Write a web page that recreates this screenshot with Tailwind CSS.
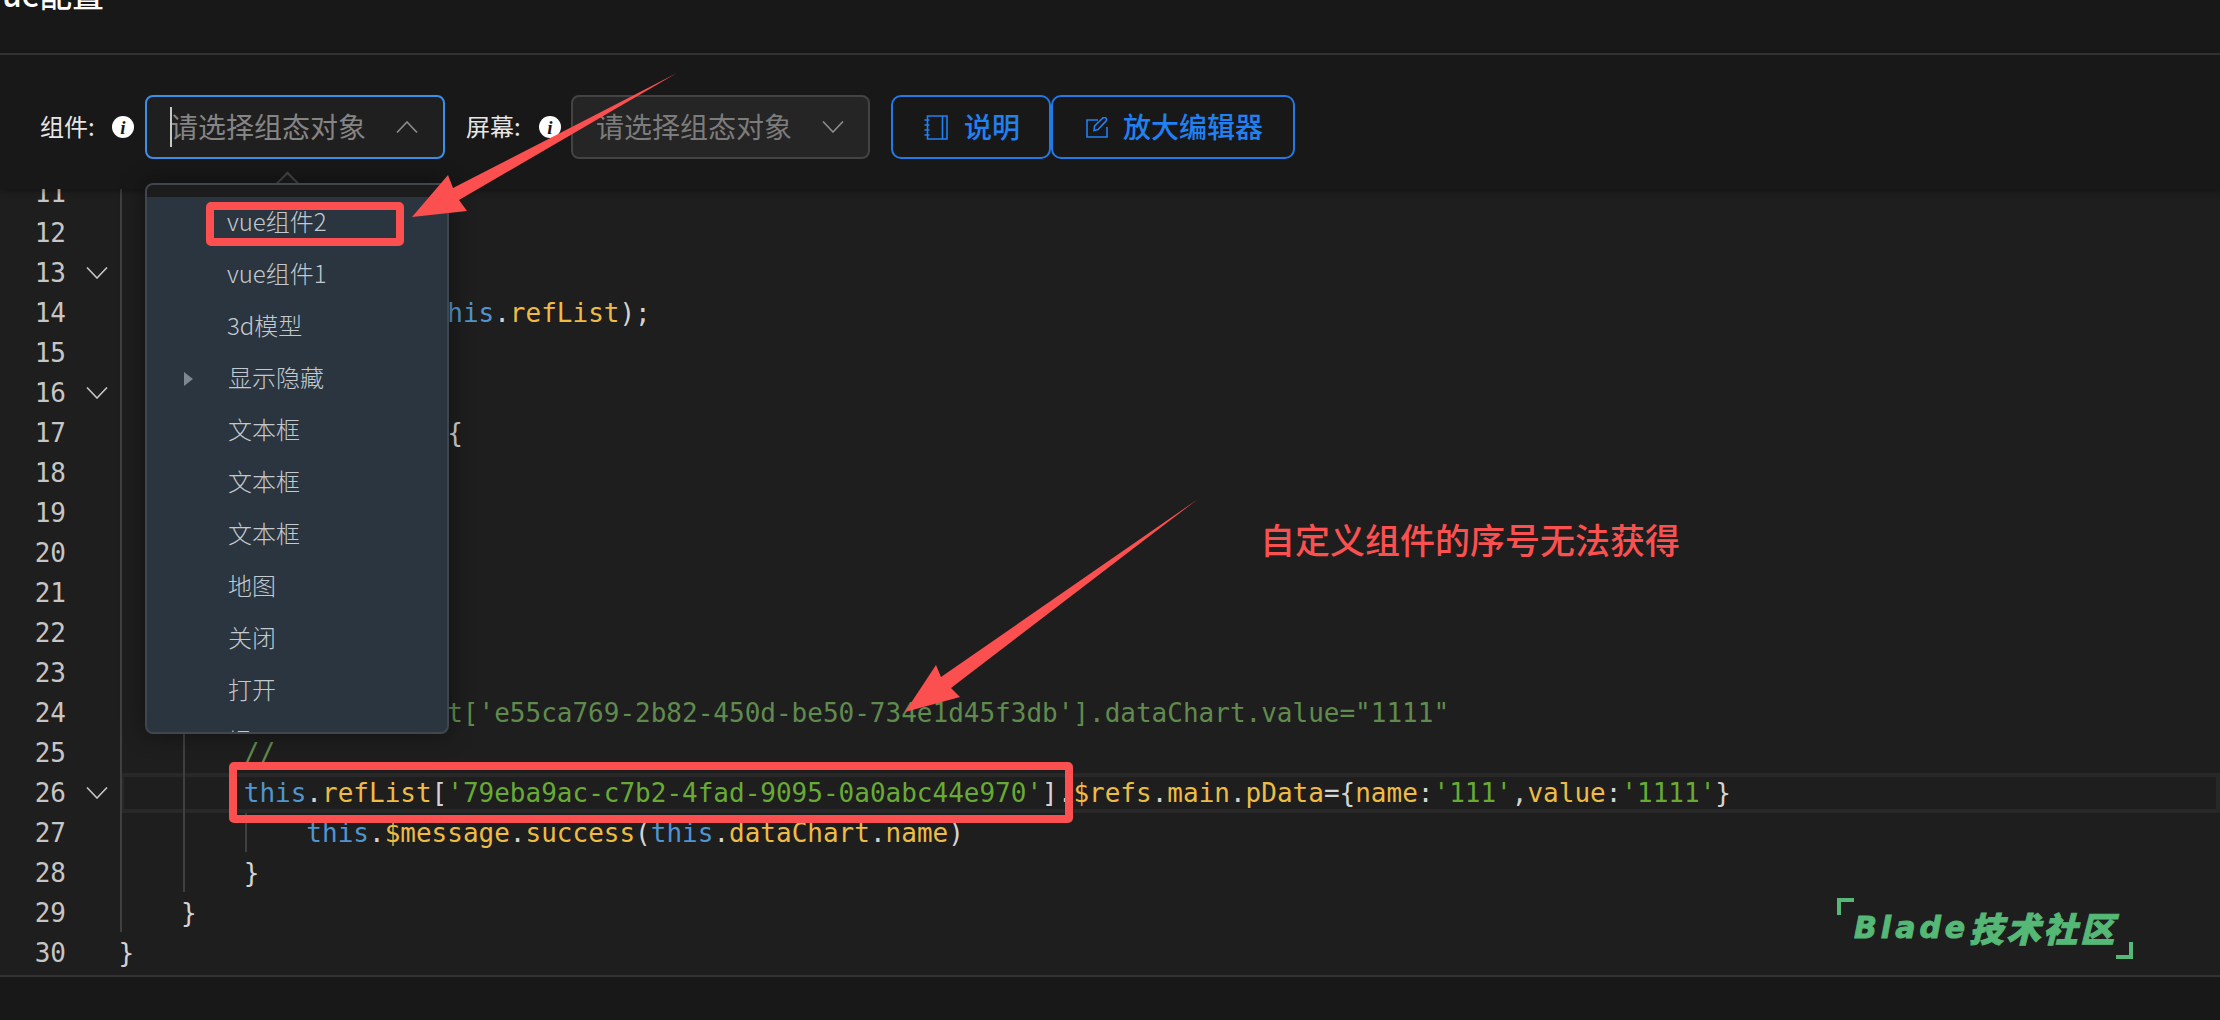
<!DOCTYPE html>
<html lang="en">
<head>
  <meta charset="UTF-8" />
  <title>ue配置</title>
  <script src="https://cdn.jsdelivr.net/npm/@tailwindcss/browser@4"></script>
</head>
<body class="bg-[#181818]">
<div class="relative w-[2220px] h-[1020px] overflow-hidden flex flex-col bg-[#181818] font-['Noto_Sans_CJK_SC',sans-serif]">

  <!-- Title bar, the title is cut off by the top of the window -->
  <header class="h-[53px] shrink-0 overflow-hidden">
    <h1 class="-mt-[23px] pl-[2px] text-[32px] leading-[32px] font-medium text-white">ue配置</h1>
  </header>
  <div class="h-[2px] shrink-0 bg-[#333333]"></div>

  <!-- Toolbar -->
  <section class="relative z-10 h-[134px] shrink-0 flex items-start pt-[40px] pl-[40px] bg-[#181818] shadow-[0_3px_6px_rgba(0,0,0,0.3)]">
    <span class="w-[72px] h-[64px] pb-[2px] flex items-center text-[24px] text-[#e6e6e6]">组件:</span>
    <span class="w-[22px] h-[22px] mt-[21px] rounded-full bg-white flex items-center justify-center font-['Liberation_Serif',serif] italic font-bold text-[19px] leading-none text-[#181818]">i</span>
    <div class="relative ml-[11px] w-[300px] h-[64px] rounded-[8px] border-2 border-[#3b8fe8] bg-[#1f1f1f] flex items-center justify-between pl-[23px] pr-[25px]">
      <span class="absolute left-[23px] top-[10px] w-[2px] h-[40px] bg-[#c8c8c8]"></span>
      <span class="pb-[2px] text-[28px] text-[#858585]">请选择组态对象</span>
      <svg class="w-[22px] h-[12px]" viewBox="0 0 22 12" fill="none" stroke="#8c8c8c" stroke-width="1.6"><path d="M1 11.5 11 1l10 10.5" /></svg>
    </div>
    <span class="ml-[21px] w-[73px] h-[64px] pb-[2px] flex items-center text-[24px] text-[#e6e6e6]">屏幕:</span>
    <span class="w-[22px] h-[22px] mt-[21px] rounded-full bg-white flex items-center justify-center font-['Liberation_Serif',serif] italic font-bold text-[19px] leading-none text-[#181818]">i</span>
    <div class="ml-[10px] w-[299px] h-[64px] rounded-[8px] border-2 border-[#434343] bg-[#252525] flex items-center justify-between pl-[23px] pr-[24px]">
      <span class="pb-[2px] text-[28px] text-[#7c7c7c]">请选择组态对象</span>
      <svg class="w-[22px] h-[12px]" viewBox="0 0 22 12" fill="none" stroke="#8c8c8c" stroke-width="1.6"><path d="M1 .5 11 11 21 .5" /></svg>
    </div>
    <button class="ml-[21px] w-[160px] h-[64px] rounded-[10px] border-2 border-[#2379e6] flex items-center pl-[31px] text-[28px] font-medium text-[#2180f2]">
      <svg class="w-[24px] h-[25px] mr-[16px]" viewBox="0 0 24 25" fill="none" stroke="#2180f2" stroke-width="1.6">
        <path d="M3.5 1h19.5v23H3.5zM18.5 1v23" />
        <path d="M.5 5h5M.5 10h5M.5 15h5M.5 20h5" />
      </svg>
      <span class="pb-[3px]">说明</span>
    </button>
    <button class="w-[244px] h-[64px] rounded-[10px] border-2 border-[#2379e6] flex items-center pl-[33px] text-[28px] font-medium text-[#2180f2]">
      <svg class="w-[22px] h-[21px] mr-[15px]" viewBox="0 0 22 21" fill="none" stroke="#2180f2" stroke-width="1.6">
        <path d="M12 3H1v17h20V10" />
        <path d="M8 13.5 8.6 9 16.5 1.2a1.8 1.8 0 0 1 3.4 2.9L12 12.5z" />
      </svg>
      <span class="pb-[3px]">放大编辑器</span>
    </button>
  </section>

  <!-- Code editor -->
  <main class="relative flex-1 overflow-hidden bg-[#1e1e1e] font-['DejaVu_Sans_Mono',monospace] text-[26px] leading-[40px] text-[#d4d4d4]">
    <div class="-mt-[16px]">
      <div class="flex h-[40px]"><span class="w-[66px] text-right text-[#c6c6c6]">11</span><span class="w-[54px]"></span><span class="flex-1 whitespace-pre"></span></div>
      <div class="flex h-[40px]"><span class="w-[66px] text-right text-[#c6c6c6]">12</span><span class="w-[54px]"></span><span class="flex-1 whitespace-pre"></span></div>
      <div class="flex h-[40px]"><span class="w-[66px] text-right text-[#c6c6c6]">13</span><span class="w-[54px] pl-[20px] flex items-center"><svg class="w-[22px] h-[12px]" viewBox="0 0 22 12" fill="none" stroke="#c5c5c5" stroke-width="1.6"><path d="M1 .5 11 11 21 .5" /></svg></span><span class="flex-1 whitespace-pre"></span></div>
      <div class="flex h-[40px]"><span class="w-[66px] text-right text-[#c6c6c6]">14</span><span class="w-[54px]"></span><span class="flex-1 whitespace-pre indent-[-1.5px]">                     <span class="text-[#4f95d0]">his</span>.<span class="text-[#eebc45]">refList</span>);</span></div>
      <div class="flex h-[40px]"><span class="w-[66px] text-right text-[#c6c6c6]">15</span><span class="w-[54px]"></span><span class="flex-1 whitespace-pre"></span></div>
      <div class="flex h-[40px]"><span class="w-[66px] text-right text-[#c6c6c6]">16</span><span class="w-[54px] pl-[20px] flex items-center"><svg class="w-[22px] h-[12px]" viewBox="0 0 22 12" fill="none" stroke="#c5c5c5" stroke-width="1.6"><path d="M1 .5 11 11 21 .5" /></svg></span><span class="flex-1 whitespace-pre"></span></div>
      <div class="flex h-[40px]"><span class="w-[66px] text-right text-[#c6c6c6]">17</span><span class="w-[54px]"></span><span class="flex-1 whitespace-pre indent-[-1.5px]">                     {</span></div>
      <div class="flex h-[40px]"><span class="w-[66px] text-right text-[#c6c6c6]">18</span><span class="w-[54px]"></span><span class="flex-1 whitespace-pre"></span></div>
      <div class="flex h-[40px]"><span class="w-[66px] text-right text-[#c6c6c6]">19</span><span class="w-[54px]"></span><span class="flex-1 whitespace-pre"></span></div>
      <div class="flex h-[40px]"><span class="w-[66px] text-right text-[#c6c6c6]">20</span><span class="w-[54px]"></span><span class="flex-1 whitespace-pre"></span></div>
      <div class="flex h-[40px]"><span class="w-[66px] text-right text-[#c6c6c6]">21</span><span class="w-[54px]"></span><span class="flex-1 whitespace-pre"></span></div>
      <div class="flex h-[40px]"><span class="w-[66px] text-right text-[#c6c6c6]">22</span><span class="w-[54px]"></span><span class="flex-1 whitespace-pre"></span></div>
      <div class="flex h-[40px]"><span class="w-[66px] text-right text-[#c6c6c6]">23</span><span class="w-[54px]"></span><span class="flex-1 whitespace-pre"></span></div>
      <div class="flex h-[40px]"><span class="w-[66px] text-right text-[#c6c6c6]">24</span><span class="w-[54px]"></span><span class="flex-1 whitespace-pre indent-[-1.5px] text-[#608b4e]">                     t['e55ca769-2b82-450d-be50-734e1d45f3db'].dataChart.value="1111"</span></div>
      <div class="flex h-[40px]"><span class="w-[66px] text-right text-[#c6c6c6]">25</span><span class="w-[54px]"></span><span class="flex-1 whitespace-pre indent-[-1.5px] text-[#608b4e]">        //</span></div>
      <div class="flex h-[40px]"><span class="w-[66px] text-right text-[#c6c6c6]">26</span><span class="w-[54px] pl-[20px] flex items-center"><svg class="w-[22px] h-[12px]" viewBox="0 0 22 12" fill="none" stroke="#c5c5c5" stroke-width="1.6"><path d="M1 .5 11 11 21 .5" /></svg></span><span class="flex-1 whitespace-pre indent-[-1.5px] shadow-[inset_0_0_0_4px_#282828]">        <span class="text-[#4f95d0]">this</span>.<span class="text-[#eebc45]">refList</span>[<span class="text-[#67ab35]">'79eba9ac-c7b2-4fad-9095-0a0abc44e970'</span>].<span class="text-[#eebc45]">$refs</span>.<span class="text-[#eebc45]">main</span>.<span class="text-[#eebc45]">pData</span>={<span class="text-[#eebc45]">name</span>:<span class="text-[#67ab35]">'111'</span>,<span class="text-[#eebc45]">value</span>:<span class="text-[#67ab35]">'1111'</span>}</span></div>
      <div class="flex h-[40px]"><span class="w-[66px] text-right text-[#c6c6c6]">27</span><span class="w-[54px]"></span><span class="flex-1 whitespace-pre indent-[-1.5px]">            <span class="text-[#4f95d0]">this</span>.<span class="text-[#eebc45]">$message</span>.<span class="text-[#eebc45]">success</span>(<span class="text-[#4f95d0]">this</span>.<span class="text-[#eebc45]">dataChart</span>.<span class="text-[#eebc45]">name</span>)</span></div>
      <div class="flex h-[40px]"><span class="w-[66px] text-right text-[#c6c6c6]">28</span><span class="w-[54px]"></span><span class="flex-1 whitespace-pre indent-[-1.5px]">        }</span></div>
      <div class="flex h-[40px]"><span class="w-[66px] text-right text-[#c6c6c6]">29</span><span class="w-[54px]"></span><span class="flex-1 whitespace-pre indent-[-1.5px]">    }</span></div>
      <div class="flex h-[40px]"><span class="w-[66px] text-right text-[#c6c6c6]">30</span><span class="w-[54px]"></span><span class="flex-1 whitespace-pre indent-[-1.5px]">}</span></div>
    </div>

    <!-- Indent guides -->
    <div class="absolute left-[120px] top-0 w-[2px] h-[743px] bg-[#404040]"></div>
    <div class="absolute left-[183px] top-0 w-[2px] h-[703px] bg-[#404040]"></div>
    <div class="absolute left-[245px] top-[624px] w-[2px] h-[39px] bg-[#404040]"></div>

    <!-- Watermark -->
    <div class="absolute left-[1837px] top-[709px] w-[17px] h-[17px] border-t-[4px] border-l-[4px] border-[#55b876]"></div>
    <div class="absolute left-[1854px] top-[722px] w-[262px] h-[34px] flex items-center font-['DejaVu_Sans','Noto_Sans_CJK_SC',sans-serif] italic font-bold text-[30px] leading-[34px] tracking-[4px] [-webkit-text-stroke:1px_#55b876] text-[#55b876] whitespace-nowrap">Blade<span class="font-['Noto_Sans_CJK_SC',sans-serif] font-black text-[34px] tracking-[3px]">技术社区</span></div>
    <div class="absolute left-[2116px] top-[753px] w-[17px] h-[17px] border-b-[4px] border-r-[4px] border-[#55b876]"></div>

    <!-- Annotation -->
    <p class="absolute left-[1260px] top-[326px] font-['Noto_Sans_CJK_SC',sans-serif] font-medium text-[35px] leading-[48px] text-[#fb5050] whitespace-nowrap">自定义组件的序号无法获得</p>
  </main>

  <div class="h-[2px] shrink-0 bg-[#333333]"></div>
  <footer class="h-[43px] shrink-0 bg-[#181818]"></footer>

  <!-- Dropdown tree -->
  <div class="absolute z-20 left-[276px] top-[174px] w-[24px] h-[24px]">
    <div class="w-[17px] h-[17px] ml-[3px] mt-[1px] rotate-45 border-t-2 border-l-2 border-[#454545] bg-[#1c1c1c]"></div>
  </div>
  <div class="absolute z-20 left-[145px] top-[183px] w-[304px] h-[551px] overflow-hidden rounded-[8px] border-2 border-[#3f464d] bg-[#2b353f] shadow-[0_0_24px_rgba(0,0,0,0.45)] text-[24px] font-light text-[#c3c9cf]">
    <div class="h-[12px] bg-[#1c1c1c]"></div>
    <ul>
      <li class="h-[52px] pl-[80px] pb-[4px] flex items-center">vue组件2</li>
      <li class="h-[52px] pl-[80px] pb-[4px] flex items-center">vue组件1</li>
      <li class="h-[52px] pl-[80px] pb-[4px] flex items-center">3d模型</li>
      <li class="relative h-[52px] pl-[81px] pb-[4px] flex items-center"><span class="absolute left-[37px] top-[19px] border-y-[7px] border-l-[9px] border-y-transparent border-l-[#7d8790]"></span>显示隐藏</li>
      <li class="h-[52px] pl-[81px] pb-[4px] flex items-center">文本框</li>
      <li class="h-[52px] pl-[81px] pb-[4px] flex items-center">文本框</li>
      <li class="h-[52px] pl-[81px] pb-[4px] flex items-center">文本框</li>
      <li class="h-[52px] pl-[81px] pb-[4px] flex items-center">地图</li>
      <li class="h-[52px] pl-[81px] pb-[4px] flex items-center">关闭</li>
      <li class="h-[52px] pl-[81px] pb-[4px] flex items-center">打开</li>
      <li class="h-[52px] pl-[81px] pb-[4px] flex items-center">提示</li>
    </ul>
  </div>

  <!-- Red markup drawn over the screenshot -->
  <svg class="absolute z-30 left-0 top-0 w-[2220px] h-[1020px] pointer-events-none" viewBox="0 0 2220 1020">
    <rect x="210" y="206" width="190" height="36" rx="1" fill="none" stroke="#fc5050" stroke-width="8" />
    <rect x="233" y="766" width="836" height="53" rx="1" fill="none" stroke="#fc5050" stroke-width="8" />
    <polygon fill="#fc5050" points="677,73 453,188 448,175 412,217 467,211 459,200" />
    <polygon fill="#fc5050" points="1198,499 941,677 936,665 905,712 960,697 951,688" />
  </svg>
</div>
</body>
</html>
